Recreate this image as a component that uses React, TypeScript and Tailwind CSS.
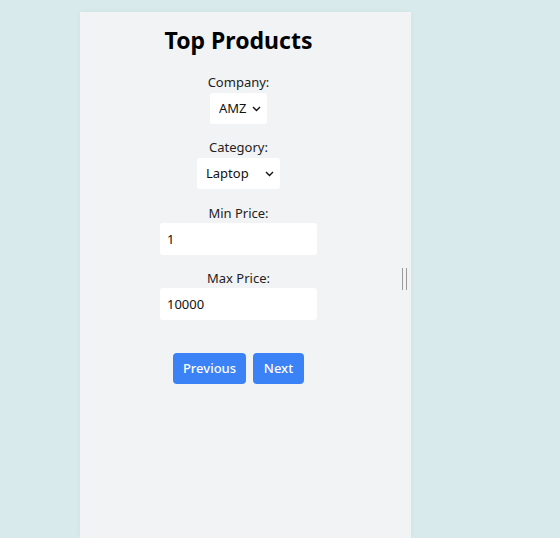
import React, { useState } from "react";

const Chevron = () => (
  <svg width="9" height="6" viewBox="0 0 9 6" className="pointer-events-none absolute right-[6px] top-1/2 -translate-y-1/2">
    <path d="M1 1l3.5 3.5L8 1" fill="none" stroke="#111" strokeWidth="1.4" />
  </svg>
);

const Field = ({ label, children }: { label: string; children: React.ReactNode }) => (
  <div className="flex flex-col items-center">
    <label className="text-[13px] leading-5 text-[#222]">{label}</label>
    {children}
  </div>
);

const App = () => {
  const [min, setMin] = useState("1");
  const [max, setMax] = useState("10000");

  return (
    <div className="h-screen overflow-hidden bg-[#d9eaed] pl-20 pt-3" style={{ fontFamily: '"Noto Sans", "Open Sans", sans-serif' }}>
      <div className="flex h-full w-[331px] bg-[#f2f3f5] shadow-[0_0_6px_rgba(0,0,0,0.04)]">
        <div className="flex w-[317px] flex-col items-center">
          <h1 className="pt-3 text-[23px] font-bold leading-8 text-black">Top Products</h1>

          <div className="mt-4 flex flex-col items-center gap-[13px]">
            <Field label="Company:">
              <div className="relative mt-[1px]">
                <select className="h-[31px] w-[57px] appearance-none rounded-[3px] bg-white pl-[9px] text-[13px] text-[#111] outline-none">
                  <option>AMZ</option>
                </select>
                <Chevron />
              </div>
            </Field>

            <Field label="Category:">
              <div className="relative mt-[1px]">
                <select className="h-[31px] w-[83px] appearance-none rounded-[3px] bg-white pl-[9px] text-[13px] text-[#111] outline-none">
                  <option>Laptop</option>
                </select>
                <Chevron />
              </div>
            </Field>

            <div className="mt-[1px]">
              <Field label="Min Price:">
                <input
                  value={min}
                  onChange={(e) => setMin(e.target.value)}
                  className="h-[32px] w-[157px] rounded-[3px] bg-white px-[7px] text-[13px] text-[#111] outline-none"
                />
              </Field>
            </div>

            <Field label="Max Price:">
              <input
                value={max}
                onChange={(e) => setMax(e.target.value)}
                className="h-[32px] w-[157px] rounded-[3px] bg-white px-[7px] text-[13px] text-[#111] outline-none"
              />
            </Field>
          </div>

          <div className="mt-[33px] flex gap-[7px]">
            <button className="h-[31px] w-[73px] rounded-[4px] bg-[#3b82f6] text-[13px] font-medium text-white">Previous</button>
            <button className="h-[31px] w-[51px] rounded-[4px] bg-[#3b82f6] text-[13px] font-medium text-white">Next</button>
          </div>
        </div>

        <div className="flex w-[14px] justify-center pt-[256px]">
          <div className="flex h-[22px] gap-[1px]">
            <span className="w-[1px] bg-[#9a9a9a]" />
            <span className="w-[1px] bg-[#f2f3f5]" />
            <span className="w-[1px] bg-[#9a9a9a]" />
          </div>
        </div>
      </div>
    </div>
  );
};

export default App;
